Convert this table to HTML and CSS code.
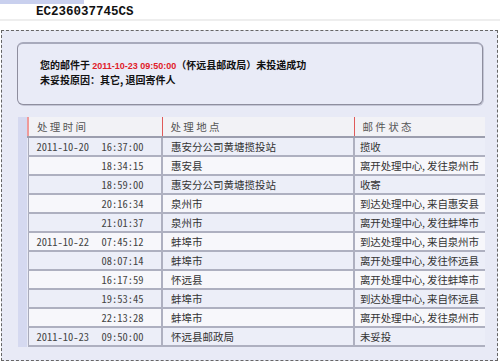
FILE: index.html
```html
<!DOCTYPE html>
<html>
<head>
<meta charset="utf-8">
<link rel="stylesheet" href="styles.css">
</head>
<body>
<div class="topbar">
  <div class="tab"></div>
  <div class="code">EC236037745CS</div>
</div>
<div class="panel">
  <div class="notice">
    <div class="line">您的邮件于 <span class="red">2011-10-23 09:50:00</span>（怀远县邮政局）未投递成功</div>
    <div class="line">未妥投原因：其它, 退回寄件人</div>
  </div>
  <div class="tablewrap">
    <table class="track">
      <colgroup><col class="c1"><col class="c2"><col class="c3"></colgroup>
      <thead>
        <tr><th>处 理 时 间</th><th>处 理 地 点</th><th>邮 件 状 态</th></tr>
      </thead>
      <tbody>
        <tr class="odd"><td><span class="d">2011-10-20</span><span class="t">16:37:00</span></td><td>惠安分公司黄塘揽投站</td><td>揽收</td></tr>
        <tr class="even"><td><span class="d"></span><span class="t">18:34:15</span></td><td>惠安县</td><td>离开处理中心, 发往泉州市</td></tr>
        <tr class="odd"><td><span class="d"></span><span class="t">18:59:00</span></td><td>惠安分公司黄塘揽投站</td><td>收寄</td></tr>
        <tr class="even"><td><span class="d"></span><span class="t">20:16:34</span></td><td>泉州市</td><td>到达处理中心, 来自惠安县</td></tr>
        <tr class="odd"><td><span class="d"></span><span class="t">21:01:37</span></td><td>泉州市</td><td>离开处理中心, 发往蚌埠市</td></tr>
        <tr class="even"><td><span class="d">2011-10-22</span><span class="t">07:45:12</span></td><td>蚌埠市</td><td>到达处理中心, 来自泉州市</td></tr>
        <tr class="odd"><td><span class="d"></span><span class="t">08:07:14</span></td><td>蚌埠市</td><td>离开处理中心, 发往怀远县</td></tr>
        <tr class="even"><td><span class="d"></span><span class="t">16:17:59</span></td><td>怀远县</td><td>离开处理中心, 发往蚌埠市</td></tr>
        <tr class="odd"><td><span class="d"></span><span class="t">19:53:45</span></td><td>蚌埠市</td><td>到达处理中心, 来自怀远县</td></tr>
        <tr class="even"><td><span class="d"></span><span class="t">22:13:28</span></td><td>蚌埠市</td><td>离开处理中心, 发往泉州市</td></tr>
        <tr class="odd"><td><span class="d">2011-10-23</span><span class="t">09:50:00</span></td><td>怀远县邮政局</td><td>未妥投</td></tr>
      </tbody>
    </table>
  </div>
</div>
</body>
</html>
```
FILE: styles.css
```css
html, body {
  margin: 0;
  padding: 0;
  background: #ffffff;
  width: 500px;
  height: 364px;
  overflow: hidden;
}
body {
  font-family: "Noto Sans CJK SC", "Liberation Sans", sans-serif;
  font-size: 10.5px;
  color: #333;
}
.topbar {
  position: relative;
  height: 21px;
  border-bottom: 2px solid #eeeeee;
  box-sizing: border-box;
  display: flex;
  align-items: center;
}
.tab {
  position: absolute;
  left: 0;
  top: 0;
  width: 84px;
  height: 4px;
  background: #c9d0ee;
}
.code {
  margin-left: 36px;
  margin-top: 4px;
  font-family: "Liberation Mono", monospace;
  font-weight: bold;
  font-size: 12.5px;
  color: #111;
}
.panel {
  margin: 9px 2px 0 1px;
  height: 331px;
  box-sizing: border-box;
  border: 1px dashed #666;
  background: #e8eaf6;
  padding: 11px 14px 0 14px;
}
.notice {
  margin-left: 1px;
  height: 63px;
  box-sizing: border-box;
  border: 1px solid #8e8e9e;
  border-top: 2px solid #a8aabc;
  border-radius: 6px;
  background: #e9ebf7;
  padding: 14px 0 0 22px;
  font-weight: bold;
  color: #111;
  box-shadow: 1px 1px 0 #c4c6d6;
}
.line {
  line-height: 14.5px;
  height: 14.5px;
  font-size: 10px;
  white-space: nowrap;
}
.red {
  color: #e0202a;
  font-family: "Liberation Sans", sans-serif;
  font-size: 9px;
  font-weight: bold;
}
.tablewrap {
  margin: 12px 0 0 2px;
  border-left: 9px solid #d5d9f0;
}
.track {
  width: 457px;
  border-collapse: collapse;
  table-layout: fixed;
  border-left: 1px solid #a9abbb;
}
.c1 { width: 134px; }
.c2 { width: 192px; }
.c3 { width: 131px; }
.track th {
  height: 19px;
  padding: 0 0 0 8px;
  text-align: left;
  font-weight: normal;
  color: #555;
  background: #f2f2f6;
  border-left: 1px solid #e05a5a;
  border-bottom: 2px solid #9c9eae;
  line-height: 19px;
}
.track th:first-child {
  border-left: 2px solid #ef9a9a;
}
.track td {
  height: 17px;
  padding: 0 0 0 8px;
  line-height: 17px;
  color: #333;
  border-bottom: 2px solid #aeb0c0;
  border-left: 2px solid #aeb0c0;
  white-space: nowrap;
  overflow: visible;
}
.track td:first-child {
  color: #444;
  font-feature-settings: "hwid";
  border-left: 1px solid #a9abbb;
}
.track tr.odd td { background: #eceef8; }
.track tr.even td { background: #f7f7fb; }
.d {
  display: inline-block;
  width: 65px;
}
.t {
  display: inline-block;
}
.track td:nth-child(3) {
  padding-left: 5px;
  letter-spacing: -0.15px;
}
```
